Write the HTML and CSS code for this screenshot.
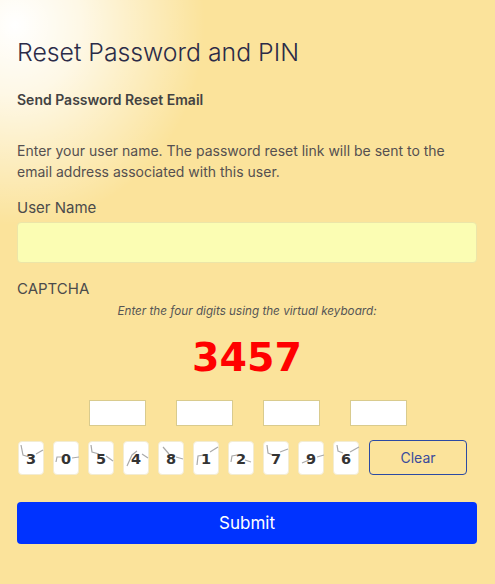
FILE: index.html
```html
<!DOCTYPE html>
<html>
<head>
<meta charset="utf-8">
<link rel="stylesheet" href="styles.css">
</head>
<body>
<main class="page">
  <h1 class="title">Reset Password and PIN</h1>
  <h2 class="subtitle">Send Password Reset Email</h2>
  <p class="intro">Enter your user name. The password reset link will be sent to the email address associated with this user.</p>
  <label class="label" for="user">User Name</label>
  <input class="text-input" id="user" type="text">
  <div class="label captcha-label">CAPTCHA</div>
  <p class="hint">Enter the four digits using the virtual keyboard:</p>
  <div class="code">3457</div>
  <div class="slots">
    <input class="slot" type="text">
    <input class="slot" type="text">
    <input class="slot" type="text">
    <input class="slot" type="text">
  </div>
  <div class="keypad">
    <button class="key"><svg class="noise" viewBox="0 0 26 33"><polyline points="2,3 4,13 10,15"/><polyline points="17,12 24,8"/></svg><span>3</span></button>
    <button class="key"><svg class="noise" viewBox="0 0 26 33"><polyline points="2,20 3,15 9,15"/><polyline points="18,16 25,15"/></svg><span>0</span></button>
    <button class="key"><svg class="noise" viewBox="0 0 26 33"><polyline points="2,3 3,10 10,12"/><polyline points="17,14 24,19"/></svg><span>5</span></button>
    <button class="key"><svg class="noise" viewBox="0 0 26 33"><polyline points="3,24 8,13 13,9"/><polyline points="18,12 24,16"/></svg><span>4</span></button>
    <button class="key"><svg class="noise" viewBox="0 0 26 33"><polyline points="4,5 10,12"/><polyline points="17,15 24,17"/></svg><span>8</span></button>
    <button class="key"><svg class="noise" viewBox="0 0 26 33"><polyline points="3,23 4,14 10,13"/><polyline points="16,10 24,5"/></svg><span>1</span></button>
    <button class="key"><svg class="noise" viewBox="0 0 26 33"><polyline points="2,20 3,14 8,13"/><polyline points="16,18 22,20"/></svg><span>2</span></button>
    <button class="key"><svg class="noise" viewBox="0 0 26 33"><polyline points="3,3 4,11 9,13"/><polyline points="16,10 24,7"/></svg><span>7</span></button>
    <button class="key"><svg class="noise" viewBox="0 0 26 33"><polyline points="3,21 10,18"/><polyline points="18,15 25,13"/></svg><span>9</span></button>
    <button class="key"><svg class="noise" viewBox="0 0 26 33"><polyline points="3,3 4,9 9,11"/><polyline points="16,10 25,5"/></svg><span>6</span></button>
    <button class="clear">Clear</button>
  </div>
  <button class="submit">Submit</button>
</main>
</body>
</html>
```

FILE: styles.css
```css
html, body {
  margin: 0;
  padding: 0;
}
body {
  width: 495px;
  height: 584px;
  overflow: hidden;
  background-color: #fbe39b;
  background-image: radial-gradient(ellipse 190px 200px at 15px 25px, #ffffff 0%, rgba(255,255,255,0.75) 35%, rgba(255,255,255,0) 100%);
  font-family: Inter, "Noto Sans", sans-serif;
  color: #4a4a4a;
}
.page {
  padding: 34px 18px 0 17px;
  display: flex;
  flex-direction: column;
}
.title {
  margin: 0;
  font-weight: 300;
  font-size: 24.8px;
  line-height: 36px;
  color: #2b2b48;
}
.subtitle {
  margin: 20px 0 0;
  font-size: 14px;
  font-weight: 600;
  line-height: 20px;
  color: #424242;
}
.intro {
  margin: 30px 0 0;
  font-size: 14px;
  line-height: 21px;
  color: #555050;
}
.label {
  display: block;
  margin-top: 16px;
  font-size: 15px;
  line-height: 20px;
  color: #4b4b4b;
}
.text-input {
  box-sizing: border-box;
  margin-top: 4px;
  width: 460px;
  height: 41px;
  background: #fbfdb3;
  border: 1px solid #ece5a8;
  border-radius: 4px;
}
.captcha-label {
  margin-top: 16px;
}
.hint {
  margin: 4px 0 0;
  text-align: center;
  font-style: italic;
  font-size: 11.7px;
  line-height: 16px;
  color: #555;
}
.code {
  margin-top: 16px;
  text-align: center;
  font-family: "DejaVu Sans", Verdana, sans-serif;
  font-weight: bold;
  font-size: 39.5px;
  line-height: 44px;
  color: #ff0000;
}
.slots {
  margin-top: 21px;
  display: flex;
  justify-content: center;
  gap: 30px;
  padding-left: 1px;
}
.slot {
  box-sizing: border-box;
  width: 57px;
  height: 26px;
  background: #fff;
  border: 1px solid #d9cb8e;
  border-radius: 0;
}
.keypad {
  margin-top: 14px;
  display: flex;
  align-items: center;
  gap: 9px;
  padding-left: 1px;
}
.key {
  position: relative;
  box-sizing: border-box;
  width: 26px;
  height: 34px;
  padding: 0;
  background: #fff;
  border: 1px solid #f3ecd2;
  border-radius: 4px;
  font-family: "DejaVu Sans", Verdana, sans-serif;
  font-weight: bold;
  font-size: 14.5px;
  color: #333;
  display: flex;
  align-items: center;
  justify-content: center;
}
.key span {
  position: relative;
  margin-top: 3px;
}
.noise {
  position: absolute;
  left: 0;
  top: 0;
  width: 26px;
  height: 33px;
  fill: none;
  stroke: #a9a9a9;
  stroke-width: 1.2;
}
.clear {
  box-sizing: border-box;
  width: 98px;
  height: 35px;
  margin-left: 1px;
  background: transparent;
  border: 1px solid #2c4aa3;
  border-radius: 4px;
  font-family: Inter, "Noto Sans", sans-serif;
  font-size: 14px;
  color: #3a4b9c;
}
.submit {
  margin-top: 27px;
  width: 460px;
  height: 42px;
  background: #0033ff;
  border: none;
  border-radius: 4px;
  font-family: Inter, "Noto Sans", sans-serif;
  font-size: 17px;
  color: #fff;
}
```
